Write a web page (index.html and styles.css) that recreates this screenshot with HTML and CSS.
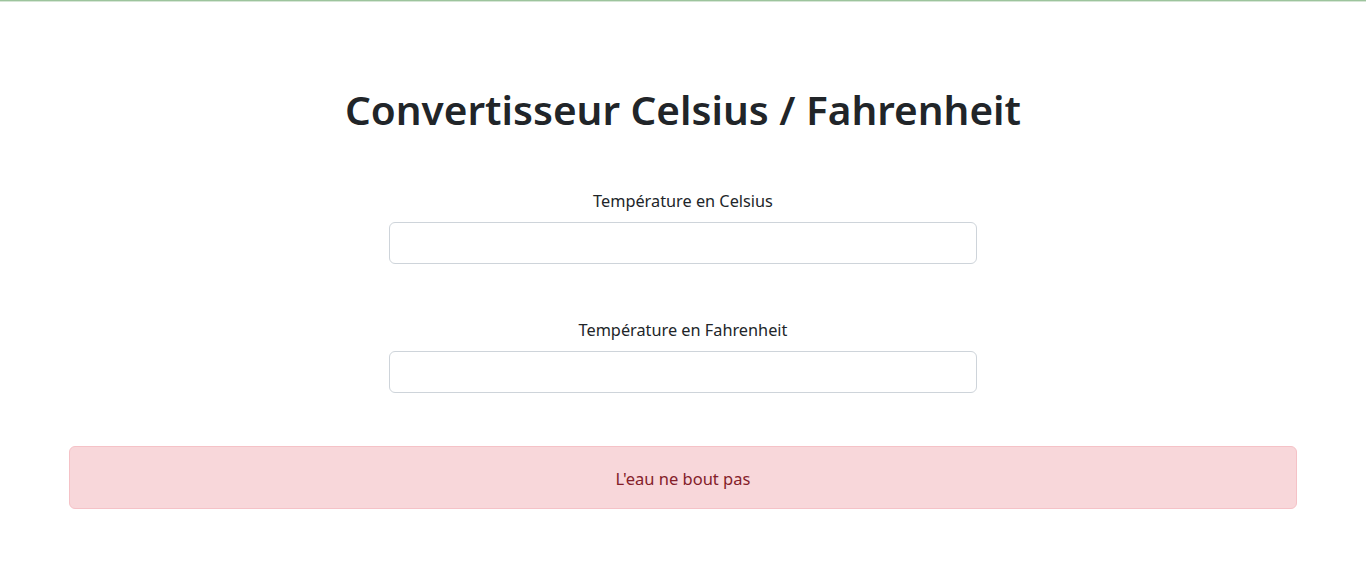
FILE: index.html
```html
<!DOCTYPE html>
<html lang="fr">
<head>
<meta charset="utf-8">
<title>Convertisseur Celsius / Fahrenheit</title>
<link rel="stylesheet" href="styles.css">
</head>
<body>
<div class="topline"></div>
<main class="container">
  <h1 class="title">Convertisseur Celsius / Fahrenheit</h1>
  <div class="field">
    <label class="label" for="c">Température en Celsius</label>
    <input class="input" id="c" type="text">
  </div>
  <div class="field">
    <label class="label" for="f">Température en Fahrenheit</label>
    <input class="input" id="f" type="text">
  </div>
  <div class="alert">L'eau ne bout pas</div>
</main>
</body>
</html>
```
FILE: styles.css
```css
html, body {
  margin: 0;
  padding: 0;
  background: #fff;
}
body {
  font-family: "Noto Sans", "Open Sans", sans-serif;
  color: #212529;
  font-size: 16px;
  line-height: 24px;
}
.topline {
  height: 1px;
  background: #9dc49d;
  border-bottom: 1px solid #d6e6d6;
}
.container {
  padding: 0 69px;
  display: flex;
  flex-direction: column;
  align-items: center;
}
.title {
  margin: 84px 0 0;
  font-size: 40.5px;
  line-height: 48px;
  font-weight: 600;
  color: #212529;
  text-align: center;
}
.field {
  width: 588px;
  display: flex;
  flex-direction: column;
  align-items: center;
  margin-top: 55px;
}
.field + .field {
  margin-top: 54px;
}
.label {
  font-size: 16.3px;
  line-height: 24px;
  margin-bottom: 9px;
}
.input {
  box-sizing: border-box;
  width: 100%;
  height: 42px;
  border: 1px solid #ced4da;
  border-radius: 6px;
  background: #fff;
  padding: 6px 12px;
  font: inherit;
  outline: none;
}
.alert {
  box-sizing: border-box;
  width: 100%;
  margin-top: 53px;
  padding: 20px 16px 17px;
  background: #f8d7da;
  border: 1px solid #f5c2c7;
  border-radius: 6px;
  color: #842029;
  font-size: 16.5px;
  text-align: center;
}
```
